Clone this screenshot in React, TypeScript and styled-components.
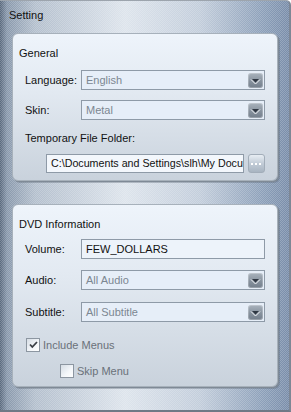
import styled, { createGlobalStyle } from "styled-components";

const GlobalStyle = createGlobalStyle`
  html, body {
    margin: 0;
    padding: 0;
    background: #ffffff;
  }
  * {
    box-sizing: border-box;
  }
`;

const Frame = styled.div`
  position: relative;
  width: 291px;
  height: 412px;
  display: flex;
  flex-direction: column;
  font-family: "Liberation Sans", Arial, sans-serif;
  font-size: 11px;
  color: #111;
  border-top: 1px solid #9ca4ad;
  border-right: 2px solid #7d8795;
  border-bottom: 2px solid #6f7986;
  border-top-right-radius: 5px;
  background:
    repeating-conic-gradient(rgba(255, 255, 255, 0.2) 0 25%, transparent 0 50%) 0 0 / 2px 2px,
    linear-gradient(
      90deg,
      #56667b 0px,
      #8797ab 7px,
      #b3bfcd 35px,
      #dde4ec 125px,
      #c2cddb 200px,
      #8a9eb8 265px,
      #788ca9 289px
    );
  overflow: hidden;
`;

const Title = styled.div`
  height: 32px;
  padding: 8px 0 0 9px;
  line-height: 13px;
`;

const Panel = styled.div<{ $height: number }>`
  margin: 0 12px 0 12px;
  width: 266px;
  height: ${({ $height }) => $height}px;
  border: 1px solid #a7b1bb;
  border-radius: 6px;
  box-shadow: 1px 1px 0 #7f8a96, 2px 2px 0 rgba(90, 100, 115, 0.35);
  background: linear-gradient(180deg, #eef4fb 0%, #e2e9f1 40%, #c9d2dc 100%);
  padding: 13px 12px 0 6px;
  display: flex;
  flex-direction: column;
`;

const Gap = styled.div`
  height: 23px;
  flex: none;
`;

const Heading = styled.div`
  line-height: 13px;
  height: 13px;
`;

const Row = styled.div<{ $top: number }>`
  display: flex;
  align-items: center;
  margin-top: ${({ $top }) => $top}px;
  padding-left: 6px;
`;

const Label = styled.div`
  width: 56px;
  flex: none;
  line-height: 13px;
`;

const FieldBox = styled.div<{ $editable?: boolean }>`
  position: relative;
  width: 185px;
  height: 20px;
  border: 1px solid #8e9aa7;
  background: ${({ $editable }) => ($editable ? "#edf3fa" : "#e6eef8")};
  color: ${({ $editable }) => ($editable ? "#111" : "#7c8792")};
  padding: 0 0 0 4px;
  line-height: 18px;
  white-space: nowrap;
  overflow: hidden;
`;

const DropButton = styled.div`
  position: absolute;
  right: 1px;
  top: 2px;
  width: 15px;
  height: 15px;
  border-radius: 3px;
  background: linear-gradient(180deg, #a9b3bd 0%, #87929e 55%, #737e8b 100%);
  box-shadow: inset 0 0 0 1px rgba(255, 255, 255, 0.25);
  display: flex;
  align-items: center;
  justify-content: center;
`;

const FolderLabel = styled.div`
  margin-top: 12px;
  padding-left: 6px;
  line-height: 13px;
`;

const FolderRow = styled.div`
  display: flex;
  align-items: center;
  gap: 4px;
  margin-top: 9px;
  padding-left: 27px;
`;

const FolderInput = styled.div`
  width: 204px;
  height: 19px;
  border: 1px solid #8e9aa7;
  background: #f3f7fc;
  padding-left: 4px;
  line-height: 17px;
  font-size: 10.7px;
  white-space: nowrap;
  overflow: hidden;
`;

const EllipsisButton = styled.div`
  width: 17px;
  height: 19px;
  border: 1px solid #a2adb9;
  border-radius: 3px;
  background: linear-gradient(180deg, #e7edf3 0%, #c2ccd7 50%, #a8b4c1 100%);
  display: flex;
  align-items: center;
  justify-content: center;
`;

const CheckRow = styled.div<{ $indent: number; $top: number }>`
  display: flex;
  align-items: center;
  gap: 3px;
  margin-top: ${({ $top }) => $top}px;
  padding-left: ${({ $indent }) => $indent}px;
  color: #6a7179;
  line-height: 13px;
`;

const Box = styled.div`
  width: 14px;
  height: 14px;
  border: 1px solid #8c96a1;
  background: linear-gradient(135deg, #d6dde5 0%, #f4f7fa 60%, #ffffff 100%);
  display: flex;
  align-items: center;
  justify-content: center;
`;

const Chevron = () => (
  <svg width="11" height="8" viewBox="0 0 11 8">
    <polyline points="1,2.5 5.5,7 10,2.5" fill="none" stroke="#f2f4f7" strokeWidth="1" />
    <polygon points="2,2 9,2 5.5,5.5" fill="#2f3742" />
  </svg>
);

const Select = ({ value }: { value: string }) => (
  <FieldBox>
    {value}
    <DropButton>
      <Chevron />
    </DropButton>
  </FieldBox>
);

const Check = () => (
  <svg width="9" height="8" viewBox="0 0 9 8">
    <polyline points="1,3.5 3.3,6 8,1" fill="none" stroke="#3a3f45" strokeWidth="1.8" />
  </svg>
);

export default function App() {
  return (
    <>
      <GlobalStyle />
      <Frame>
        <Title>Setting</Title>
        <Panel $height={148}>
          <Heading>General</Heading>
          <Row $top={10}>
            <Label>Language:</Label>
            <Select value="English" />
          </Row>
          <Row $top={10}>
            <Label>Skin:</Label>
            <Select value="Metal" />
          </Row>
          <FolderLabel>Temporary File Folder:</FolderLabel>
          <FolderRow>
            <FolderInput>C:\Documents and Settings\slh\My Documents</FolderInput>
            <EllipsisButton>
              <svg width="11" height="4" viewBox="0 0 11 4">
                <rect x="0" y="1" width="2" height="2" fill="#ffffff" />
                <rect x="4" y="1" width="2" height="2" fill="#ffffff" />
                <rect x="8" y="1" width="2" height="2" fill="#ffffff" />
              </svg>
            </EllipsisButton>
          </FolderRow>
        </Panel>
        <Gap />
        <Panel $height={183}>
          <Heading>DVD Information</Heading>
          <Row $top={8}>
            <Label>Volume:</Label>
            <FieldBox $editable>FEW_DOLLARS</FieldBox>
          </Row>
          <Row $top={11}>
            <Label>Audio:</Label>
            <Select value="All Audio" />
          </Row>
          <Row $top={12}>
            <Label>Subtitle:</Label>
            <Select value="All Subtitle" />
          </Row>
          <CheckRow $indent={7} $top={16}>
            <Box>
              <Check />
            </Box>
            Include Menus
          </CheckRow>
          <CheckRow $indent={41} $top={12}>
            <Box />
            Skip Menu
          </CheckRow>
        </Panel>
      </Frame>
    </>
  );
}
